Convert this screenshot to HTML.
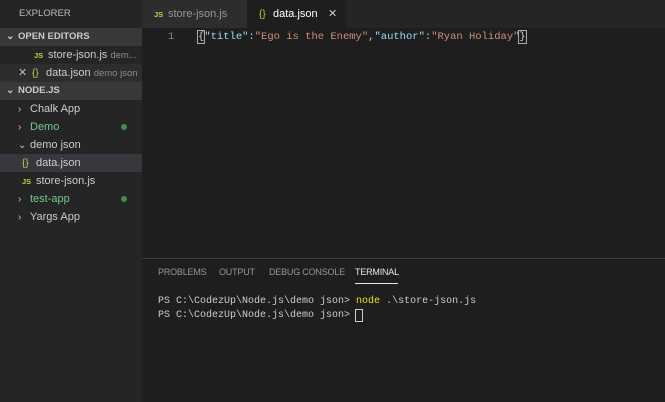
<!DOCTYPE html>
<html><head><style>
*{margin:0;padding:0;box-sizing:border-box}
body{width:665px;height:402px;background:#1e1e1e;font-family:"Liberation Sans",sans-serif;overflow:hidden;position:relative;color:#ccc}
.side{position:absolute;left:0;top:0;width:142px;height:402px;background:#252526}
.row{position:absolute;left:0;width:142px;height:18px;line-height:18px;font-size:11px;white-space:nowrap;overflow:hidden}
.hdr{font-weight:bold;font-size:9.5px;color:#ccc}
.js{color:#cbcb41;font-weight:bold;font-size:7.5px;display:inline-block;width:14px}
.br{color:#cbcb41;font-size:10px;display:inline-block;width:14px}
.dim{color:#8b8b8b;font-size:9.5px}
.chev{display:inline-block;width:12px;color:#c5c5c5;font-size:10px}
.dot{position:absolute;left:121px;top:6px;width:6px;height:6px;border-radius:3px;background:#3f8f53}
.mono{font-family:"Liberation Mono",monospace}
.pt{position:absolute;top:267px;font-size:9px;color:#969696;white-space:nowrap;letter-spacing:-0.2px}
</style></head><body>
<div class="side">
<div class="row" style="top:5px;left:19px;font-size:9.5px;color:#bbb">EXPLORER</div>
<div class="row hdr" style="top:28px;background:#383838;padding-left:6px"><span class="chev">⌄</span>OPEN EDITORS</div>
<div class="row" style="top:46px;padding-left:34px"><span class="js">JS</span>store-json.js <span class="dim">dem...</span></div>
<div class="row" style="top:64px;padding-left:18px;background:#2d2d2e"><span style="display:inline-block;width:14px;color:#bbb">✕</span><span class="br">{}</span>data.json <span class="dim">demo json</span></div>
<div class="row hdr" style="top:82px;background:#383838;padding-left:6px"><span class="chev">⌄</span>NODE.JS</div>
<div class="row" style="top:100px;padding-left:18px"><span class="chev">›</span>Chalk App</div>
<div class="row" style="top:118px;padding-left:18px;color:#73c991"><span class="chev">›</span>Demo<span class="dot"></span></div>
<div class="row" style="top:136px;padding-left:18px"><span class="chev">⌄</span>demo json</div>
<div class="row" style="top:154px;padding-left:22px;background:#37373d"><span class="br">{}</span>data.json</div>
<div class="row" style="top:172px;padding-left:22px"><span class="js">JS</span>store-json.js</div>
<div class="row" style="top:190px;padding-left:18px;color:#73c991"><span class="chev">›</span>test-app<span class="dot"></span></div>
<div class="row" style="top:208px;padding-left:18px"><span class="chev">›</span>Yargs App</div>
</div>
<div style="position:absolute;left:142px;top:0;width:523px;height:28px;background:#252526"></div>
<div style="position:absolute;left:142px;top:0;width:105px;height:28px;background:#2d2d2d;line-height:28px;font-size:11px;color:#969696;padding-left:12px"><span class="js">JS</span>store-json.js</div>
<div style="position:absolute;left:247px;top:0;width:99px;height:28px;background:#1e1e1e;line-height:28px;font-size:11px;color:#fff;padding-left:12px"><span class="br">{}</span>data.json<span style="position:absolute;left:81px;color:#ccc">✕</span></div>
<div class="mono" style="position:absolute;left:142px;top:29px;font-size:10.5px;line-height:16px;white-space:pre;color:#ccc"><span style="color:#858585;position:absolute;left:26px">1</span><span style="position:absolute;left:56px"><span style="outline:1px solid #aaa">{</span><span style="color:#9cdcfe">"title"</span>:<span style="color:#ce9178">"Ego is the Enemy"</span>,<span style="color:#9cdcfe">"author"</span>:<span style="color:#ce9178">"Ryan Holiday"</span><span style="outline:1px solid #aaa">}</span></span></div>
<div style="position:absolute;left:142px;top:258px;width:523px;height:1px;background:#3c3c3c"></div>
<div class="pt" style="left:158px">PROBLEMS</div>
<div class="pt" style="left:219px">OUTPUT</div>
<div class="pt" style="left:269px">DEBUG CONSOLE</div>
<div class="pt" style="left:355px;color:#e7e7e7">TERMINAL</div>
<div style="position:absolute;left:355px;top:283px;width:43px;height:1px;background:#e7e7e7"></div>
<div class="mono" style="position:absolute;left:158px;top:295px;font-size:10px;line-height:14px;white-space:pre;color:#ccc">PS C:\CodezUp\Node.js\demo json&gt; <span style="color:#e5e510">node</span> .\store-json.js
PS C:\CodezUp\Node.js\demo json&gt; <span style="outline:1px solid #ccc">&nbsp;</span></div>
</body></html>
